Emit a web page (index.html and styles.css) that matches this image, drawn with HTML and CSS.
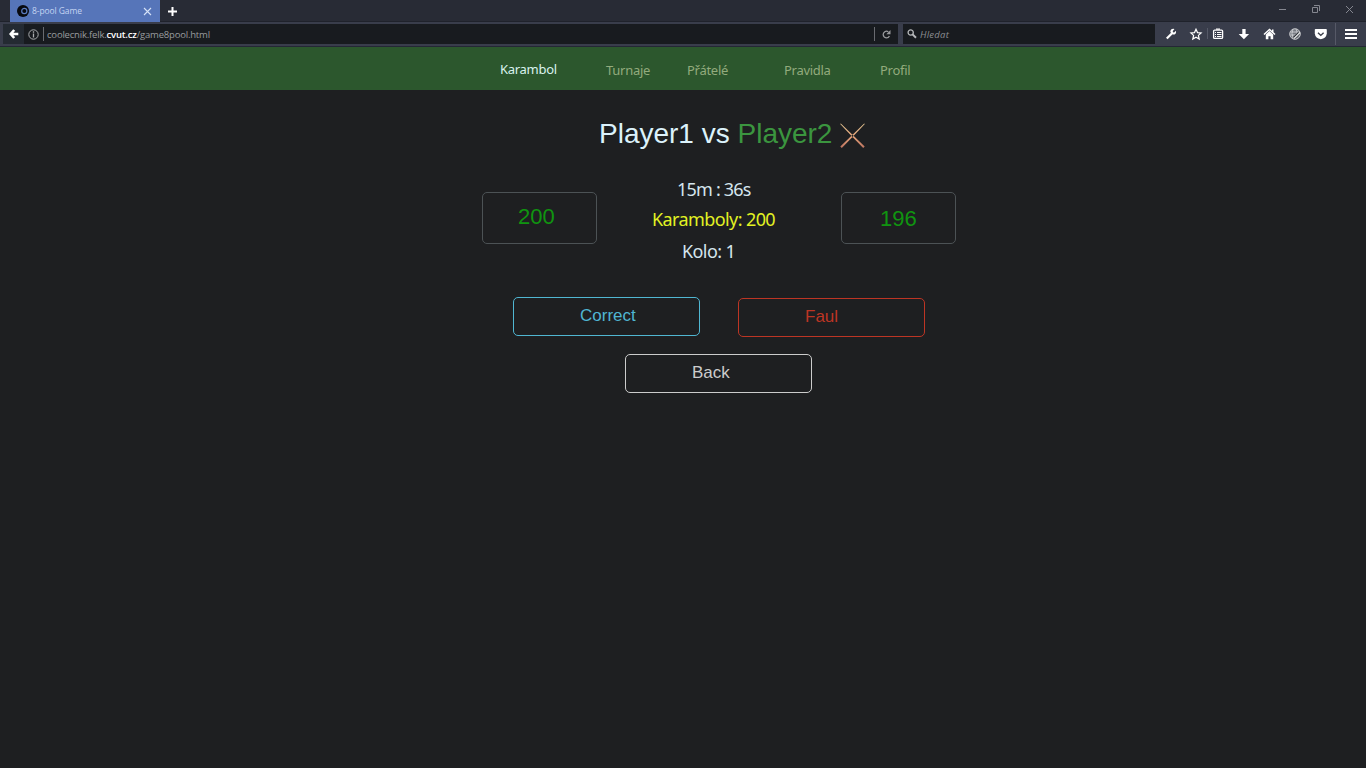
FILE: index.html
```html
<!DOCTYPE html>
<html lang="cs">
<head>
<meta charset="utf-8">
<title>8-pool Game</title>
<link rel="stylesheet" href="styles.css">
</head>
<body>
<div class="titlebar">
  <div class="tab">
    <svg class="favicon" width="12" height="12" viewBox="0 0 12 12"><circle cx="6" cy="6" r="6" fill="#07090f"/><circle cx="7.3" cy="6" r="2.6" fill="none" stroke="#5b7cc0" stroke-width="1.2"/></svg>
    <span class="tab-title">8-pool Game</span>
    <svg width="9" height="9" viewBox="0 0 9 9"><path d="M1 1l7 7M8 1L1 8" stroke="#d5e2f7" stroke-width="1.1"/></svg>
  </div>
  <svg class="new-tab" width="9" height="9" viewBox="0 0 9 9"><path d="M4.5 0v9M0 4.5h9" stroke="#fff" stroke-width="2"/></svg>
  <svg class="window-controls" width="74" height="9" viewBox="0 0 74 9" fill="none" stroke="#858790"><path d="M0 4.5h7M67 1l7 7M74 1l-7 7"/><path d="M33.5 2.5h5v5h-5zM35 .5h5.500v5.500"/></svg>
</div>
<div class="toolbar">
  <div class="address">
    <div class="back"><svg width="10" height="10" viewBox="0 0 10 10"><path d="M5.200 1L1.700 5L5.200 9M2 5h7.300" fill="none" stroke="#fff" stroke-width="2.600"/></svg></div>
    <svg class="info" width="11" height="11" viewBox="0 0 11 11"><circle cx="5.500" cy="5.500" r="4.700" fill="none" stroke="#aaadaf"/><path d="M5.500 2.300v1.400M5.500 4.500v4" stroke="#aaadaf" stroke-width="1.300"/></svg>
    <span class="divider"></span>
    <span class="url">coolecnik.felk.<b>cvut.cz</b>/game8pool.html</span>
    <span class="divider"></span>
    <svg class="reload" width="9" height="9" viewBox="0 0 9 9"><path d="M6.300 1.700Q4.500.700 2.800 1.700Q1 3 1.200 4.800Q1.500 7.500 4.200 7.900Q6.500 8 7.400 6" fill="none" stroke="#999b9d" stroke-width="1.300"/><path d="M8.500 0v4.300H4.300z" fill="#999b9d"/></svg>
  </div>
  <div class="search">
    <svg width="10" height="10" viewBox="0 0 10 10"><circle cx="3.700" cy="3.500" r="2.600" fill="none" stroke="#b6b8ba" stroke-width="1.300"/><path d="M5.600 5.400L9 8.800" stroke="#b6b8ba" stroke-width="2"/></svg>
    <span class="search-text">Hledat</span>
  </div>
  <svg class="tools" width="211" height="24" viewBox="1155 22 211 24">
    <path d="M1166.800 38.500L1172 33.300" stroke="#fff" stroke-width="2.200"/><path d="M1174.500 29Q1170.500 28.200 1170.300 32L1172.700 34.600Q1176.600 34.800 1176 30.700L1173.800 32.700L1172.600 31.300Z" fill="#fff"/>
    <path d="M1196 29.200l1.500 3.400 3.600.4-2.700 2.400.8 3.700-3.200-1.900-3.200 1.900.8-3.700-2.700-2.400 3.600-.4z" fill="none" stroke="#fff" stroke-width="1.200"/>
    <path d="M1207.500 28v11" stroke="#555967"/>
    <rect x="1213.600" y="30.100" width="9" height="8.300" rx="1" fill="none" stroke="#fff" stroke-width="1.300"/><path d="M1216 29.200h4M1215 32.500h1M1217 32.500h4.500M1215 34.500h1M1217 34.500h4.500M1215 36.500h1M1217 36.500h4.500" stroke="#fff" stroke-width="1.200"/>
    <path d="M1242.300 29h3.300v5h3.500l-5.200 5.200-5.200-5.200h3.600z" fill="#fff"/>
    <path d="M1264 34.500l5.500-5 5.500 5" fill="none" stroke="#fff" stroke-width="1.500"/><path d="M1265.800 34.500l3.700-3.400 3.700 3.400v4.700h-2.600v-3h-2.200v3h-2.600zM1272 29.500h1.500v3H1272z" fill="#fff"/>
    <circle cx="1295" cy="34" r="5.300" fill="#777b83" stroke="#c5c6ca"/><path d="M1290.500 32h8M1290.500 35h6M1293 29q-2 4 0 9M1296 29q2 3 .5 6" fill="none" stroke="#d4d6d9" stroke-width=".8"/><path d="M1294 38l5-5" stroke="#25282f" stroke-width="2.500"/><path d="M1294 38.500l6-6" stroke="#e8e9ea" stroke-width="1.300"/>
    <path d="M1315.500 29h10.500q.8 0 .8.800v3.700q-.6 5-6 5.700-5.400-.7-6-5.700v-3.700q0-.8.700-.8z" fill="#fff"/><path d="M1318 32.700l2.800 2.700 2.800-2.700" fill="none" stroke="#393d49" stroke-width="1.400"/>
    <path d="M1335.500 23v22" stroke="#565967"/>
    <path d="M1345 30h12M1345 34h12M1345 38h12" stroke="#fff" stroke-width="2"/>
  </svg>
</div>
<nav class="nav">
  <a class="nav-item nav-active">Karambol</a>
  <a class="nav-item nav-tournaments">Turnaje</a>
  <a class="nav-item nav-friends">Přátelé</a>
  <a class="nav-item nav-rules">Pravidla</a>
  <a class="nav-item nav-profile">Profil</a>
</nav>
<main class="game">
  <h1 class="title"><span>Player1 vs <span class="opponent">Player2</span></span>
    <svg class="cross" width="25" height="26" viewBox="0 0 25 26"><defs><linearGradient id="brass" x1="0" y1="0" x2="0" y2="26" gradientUnits="userSpaceOnUse"><stop offset="0" stop-color="#e2c591"/><stop offset=".55" stop-color="#e2a078"/><stop offset="1" stop-color="#b66d5c"/></linearGradient></defs><path d="M.2 1L.8 .4 13 12.200 24.700 23.500 23.200 25.100 12 13.500zM24.800 1L24.200.4 12 12.200.3 23.500 1.800 25.100 13 13.500z" fill="url(#brass)"/></svg>
  </h1>
  <section class="scores">
    <div class="score score-left">200</div>
    <div class="status">
      <div class="time">15m : 36s</div>
      <div class="caroms">Karamboly: 200</div>
      <div class="round">Kolo: 1</div>
    </div>
    <div class="score score-right">196</div>
  </section>
  <div class="actions">
    <button class="button correct">Correct</button>
    <button class="button foul">Faul</button>
  </div>
  <button class="button back-button">Back</button>
</main>
</body>
</html>
```
FILE: styles.css
```css
* { box-sizing: border-box; }
body { margin: 0; height: 768px; overflow: hidden; background: #1e1f21; font-family: "Liberation Sans", Arial, sans-serif; }
svg { display: block; flex: none; }
.titlebar { display: flex; height: 22px; padding-left: 10px; background: #282b35; border-bottom: 1px solid #1f222b; }
.tab { display: flex; align-items: center; width: 150px; height: 22px; padding: 0 8px 0 7px; background: #5675b9; }
.tab-title { flex: 1; margin-left: 3px; font: 8.5px/22px "Open Sans", sans-serif; color: #c3d4f2; letter-spacing: -.1px; }
.new-tab { margin: 7px 0 0 8px; }
.window-controls { margin: 5px 13px 0 auto; }
.toolbar { display: flex; height: 25px; padding: 2px 0 0 3px; background: #393d4b; border-bottom: 1px solid #242735; }
.address { display: flex; align-items: center; width: 895px; height: 20px; background: #181b1f; }
.back { display: flex; align-items: center; justify-content: center; width: 21px; height: 20px; background: #242a32; }
.info { margin: 0 4px; }
.divider { width: 1px; height: 14px; background: #696b70; }
.url { width: 830px; padding: 1px 0 0 3px; font: 9.5px/19px "Open Sans", sans-serif; color: #999b9e; letter-spacing: -.19px; white-space: nowrap; }
.url b { color: #fff; font-weight: 600; }
.reload { margin-left: 7px; }
.search { display: flex; align-items: center; gap: 3px; width: 252px; height: 20px; margin-left: 5px; padding-left: 4px; background: #181b1f; color: #8c8e92; font: italic 9.5px/19px "Open Sans", sans-serif; letter-spacing: .25px; }
.search-text { padding-top: 1px; }
.tools { margin-top: -2px; }
.nav { display: flex; height: 43px; padding: 14px 0 0 500px; background: #2c572d; font: 13px/18px "Noto Sans", sans-serif; color: #93ab7d; letter-spacing: -.28px; }
.nav-item { white-space: nowrap; }
.nav-active { width: 106px; margin-top: -1px; color: #d9f2ed; }
.nav-tournaments { width: 81px; }
.nav-friends { width: 97px; }
.nav-rules { width: 96px; }
.game { width: 476px; margin-left: 481px; }
.title { display: flex; height: 102px; margin: 0; padding: 28px 0 0 118px; font-size: 28px; line-height: 32px; font-weight: normal; color: #dcf2fb; white-space: nowrap; }
.opponent { color: #3b953f; }
.cross { margin: 5px 0 0 8px; }
.scores { display: flex; height: 104px; padding-left: 1px; }
.score { width: 115px; height: 52px; border: 1px solid #4c5255; border-radius: 5px; color: #109410; font-size: 22px; line-height: 47px; }
.score-left { padding-left: 35px; }
.score-right { padding-left: 38px; line-height: 51px; }
.status { width: 244px; margin-top: -17px; padding-left: 55px; font: 18px/28px "Noto Sans", sans-serif; color: #d5e5ee; letter-spacing: -.6px; white-space: nowrap; }
.time { padding-left: 25px; letter-spacing: -.8px; }
.caroms { margin-top: 2px; color: #e2f223; }
.round { margin-top: 4px; padding-left: 30px; }
.actions { display: flex; gap: 38px; margin: 1px 0 0 32px; height: 57px; }
.button { display: block; width: 187px; height: 39px; padding: 0 0 2px 66px; border: 1px solid #ccc; border-radius: 5px; background: transparent; color: #ccc; font: 17px/35px "Liberation Sans", Arial, sans-serif; text-align: left; }
.correct { border-color: #50b6d2; color: #50b6d2; }
.foul { margin-top: 1px; border-color: #bd3524; color: #bd3524; }
.back-button { margin-left: 144px; }
```
